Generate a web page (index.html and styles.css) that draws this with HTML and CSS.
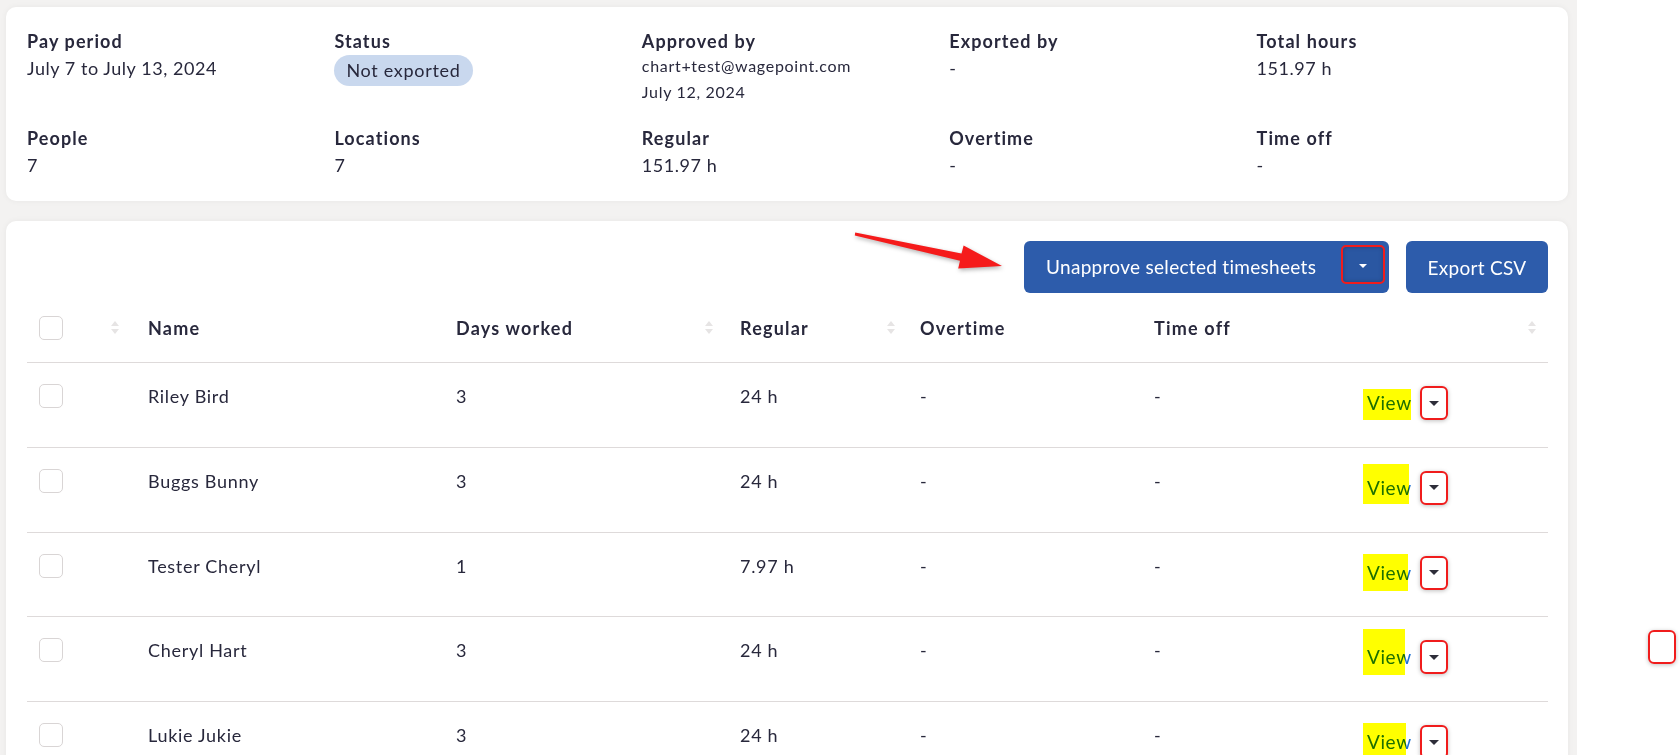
FILE: index.html
```html
<!DOCTYPE html>
<html lang="en">
<head>
<meta charset="UTF-8">
<meta name="viewport" content="width=device-width, initial-scale=1.0">
<title>Timesheets - Pay period</title>
<link rel="stylesheet" href="styles.css">
</head>
<body>
<div class="page">

  <section class="card summary">
    <div class="stat">
      <div class="stat-label">Pay period</div>
      <div class="stat-value">July 7 to July 13, 2024</div>
    </div>
    <div class="stat">
      <div class="stat-label">Status</div>
      <span class="pill">Not exported</span>
    </div>
    <div class="stat">
      <div class="stat-label">Approved by</div>
      <div class="stat-small">chart+test@wagepoint.com</div>
      <div class="stat-small">July 12, 2024</div>
    </div>
    <div class="stat">
      <div class="stat-label">Exported by</div>
      <div class="stat-value">-</div>
    </div>
    <div class="stat">
      <div class="stat-label">Total hours</div>
      <div class="stat-value">151.97 h</div>
    </div>
    <div class="stat">
      <div class="stat-label">People</div>
      <div class="stat-value">7</div>
    </div>
    <div class="stat">
      <div class="stat-label">Locations</div>
      <div class="stat-value">7</div>
    </div>
    <div class="stat">
      <div class="stat-label">Regular</div>
      <div class="stat-value">151.97 h</div>
    </div>
    <div class="stat">
      <div class="stat-label">Overtime</div>
      <div class="stat-value">-</div>
    </div>
    <div class="stat">
      <div class="stat-label">Time off</div>
      <div class="stat-value">-</div>
    </div>
  </section>

  <section class="card sheets">
    <div class="toolbar">
      <button class="btn btn-split">
        <span class="btn-text">Unapprove selected timesheets</span>
        <span class="btn-caret"><span class="tri tri-white"></span></span>
      </button>
      <button class="btn btn-export">Export CSV</button>
    </div>

    <div class="table">
      <div class="row head">
        <div class="cell cell-check"><span class="checkbox"></span><span class="sort sort-name"></span></div>
        <div class="cell">Name</div>
        <div class="cell">Days worked<span class="sort sort-days"></span></div>
        <div class="cell">Regular<span class="sort sort-reg"></span></div>
        <div class="cell">Overtime</div>
        <div class="cell">Time off</div>
        <div class="cell"><span class="sort sort-end"></span></div>
      </div>

      <div class="row">
        <div class="cell cell-check"><span class="checkbox"></span></div>
        <div class="cell">Riley Bird</div>
        <div class="cell">3</div>
        <div class="cell">24 h</div>
        <div class="cell">-</div>
        <div class="cell">-</div>
        <div class="cell cell-action"><a class="view">View<span class="mark"></span></a><span class="caret-box"><span class="tri"></span></span></div>
      </div>
      <div class="row">
        <div class="cell cell-check"><span class="checkbox"></span></div>
        <div class="cell">Buggs Bunny</div>
        <div class="cell">3</div>
        <div class="cell">24 h</div>
        <div class="cell">-</div>
        <div class="cell">-</div>
        <div class="cell cell-action"><a class="view">View<span class="mark"></span></a><span class="caret-box"><span class="tri"></span></span></div>
      </div>
      <div class="row">
        <div class="cell cell-check"><span class="checkbox"></span></div>
        <div class="cell">Tester Cheryl</div>
        <div class="cell">1</div>
        <div class="cell">7.97 h</div>
        <div class="cell">-</div>
        <div class="cell">-</div>
        <div class="cell cell-action"><a class="view">View<span class="mark"></span></a><span class="caret-box"><span class="tri"></span></span></div>
      </div>
      <div class="row">
        <div class="cell cell-check"><span class="checkbox"></span></div>
        <div class="cell">Cheryl Hart</div>
        <div class="cell">3</div>
        <div class="cell">24 h</div>
        <div class="cell">-</div>
        <div class="cell">-</div>
        <div class="cell cell-action"><a class="view">View<span class="mark"></span></a><span class="caret-box"><span class="tri"></span></span></div>
      </div>
      <div class="row">
        <div class="cell cell-check"><span class="checkbox"></span></div>
        <div class="cell">Lukie Jukie</div>
        <div class="cell">3</div>
        <div class="cell">24 h</div>
        <div class="cell">-</div>
        <div class="cell">-</div>
        <div class="cell cell-action"><a class="view">View<span class="mark"></span></a><span class="caret-box"><span class="tri"></span></span></div>
      </div>
    </div>
  </section>

  <!-- annotation arrow pointing at the bulk action button -->
  <svg class="arrow" width="180" height="60" viewBox="0 0 180 60">
    <polygon points="15.2,12.6 121.5,33.4 123.6,25.6 162,46 118.2,48.6 120,40.8 14.8,15.4" fill="#f51b1b"/>
  </svg>
</div>

<span class="stray-box"></span>
</body>
</html>
```

FILE: styles.css
```css
body {
  margin: 0;
  font-family: Lato, "Liberation Sans", sans-serif;
  color: #28283c;
  background-color: #fff;
}

.page {
  position: relative;
  width: 1577px;
  height: 755px;
  box-sizing: border-box;
  padding: 7px 9px 0 6px;
  background-color: #f3f2f1;
  overflow: hidden;
}

.card {
  background-color: #fff;
  border-radius: 10px;
  box-shadow: 0 0 6px rgba(0, 0, 0, 0.05);
}

/* summary card */
.summary {
  display: grid;
  grid-template-columns: repeat(5, 1fr);
  row-gap: 22px;
  padding: 22px 4px 20px 21px;
}

.stat-label {
  font-size: 18px;
  font-weight: 700;
  line-height: 24px;
  letter-spacing: 1.1px;
}

.stat-value {
  font-size: 18px;
  line-height: 31px;
  letter-spacing: 0.55px;
}

.stat-small {
  font-size: 16px;
  line-height: 25.5px;
  letter-spacing: 0.7px;
}

.pill {
  display: inline-block;
  margin-top: 2px;
  height: 31px;
  line-height: 31px;
  padding: 0 12px;
  border-radius: 16px;
  background-color: #c9d8ee;
  font-size: 18px;
  letter-spacing: 0.7px;
}

/* timesheets card */
.sheets {
  margin-top: 20px;
  padding: 20px 20px 0 21px;
  height: 600px;
}

.toolbar {
  display: flex;
  justify-content: flex-end;
  gap: 17px;
}

.btn {
  height: 52px;
  border: none;
  border-radius: 6px;
  background-color: #2d5cab;
  color: #fff;
  font-family: Lato, "Liberation Sans", sans-serif;
  font-size: 19px;
  letter-spacing: 0.3px;
  cursor: pointer;
}

.btn-split {
  display: flex;
  align-items: flex-start;
  width: 365px;
  padding: 0 4px 0 22px;
}

.btn-text {
  line-height: 52px;
}

.btn-caret {
  display: flex;
  align-items: center;
  justify-content: center;
  margin-left: auto;
  margin-top: 4px;
  width: 44px;
  height: 39px;
  box-sizing: border-box;
  border: 2px solid #f01c1c;
  border-radius: 5px;
  background-color: #2a57a2;
  box-shadow: inset 0 0 4px rgba(0, 0, 0, 0.25);
}

.btn-export {
  width: 142px;
}

.tri {
  width: 0;
  height: 0;
  border-left: 5px solid transparent;
  border-right: 5px solid transparent;
  border-top: 5px solid #2e2e3a;
}

.tri-white {
  margin-top: 3px;
  border-top-color: #fff;
  border-left-width: 4px;
  border-right-width: 4px;
  border-top-width: 4px;
}

/* table */
.row {
  display: grid;
  grid-template-columns: 121px 308px 284px 180px 234px 213px 181px;
  height: 84.75px;
  box-sizing: border-box;
  border-bottom: 1px solid #dedada;
  font-size: 18px;
  letter-spacing: 0.7px;
}

.row.head {
  height: 70px;
  font-weight: 700;
  letter-spacing: 1.2px;
}

.cell {
  padding-top: 21px;
  line-height: 24px;
}

.head .cell {
  display: flex;
  align-items: center;
  padding-top: 0;
}

.cell-check {
  display: flex;
  padding-left: 12px;
}

.checkbox {
  display: block;
  width: 24px;
  height: 24px;
  box-sizing: border-box;
  border: 1px solid #d9d5d5;
  border-radius: 5px;
  background-color: #fff;
}

.sort {
  margin-left: auto;
  width: 8px;
  height: 13px;
  position: relative;
}

.sort::before,
.sort::after {
  content: "";
  position: absolute;
  left: 0;
  border-left: 4px solid transparent;
  border-right: 4px solid transparent;
}

.sort::before {
  top: 0;
  border-bottom: 5px solid #e6e4e4;
}

.sort::after {
  bottom: 0;
  border-top: 5px solid #e6e4e4;
}

.sort-name { margin-right: 29px; }
.sort-days { margin-right: 27px; }
.sort-reg { margin-right: 25px; }
.sort-end { margin-right: 12px; }

.cell-action {
  display: flex;
  align-items: center;
  gap: 8px;
  padding-top: 23px;
  height: 34px;
}

.view {
  position: relative;
  display: block;
  font-size: 19px;
  line-height: 34px;
  letter-spacing: 0.6px;
  color: #1d6fd1;
  cursor: pointer;
}

/* hand drawn highlighter marks */
.mark {
  position: absolute;
  left: -4px;
  background-color: #ffff00;
  mix-blend-mode: multiply;
}

.row:nth-child(2) .mark { top: 3px; width: 48px; height: 31px; }
.row:nth-child(3) .mark { top: -7px; width: 46px; height: 40px; }
.row:nth-child(4) .mark { top: -2px; width: 45px; height: 37px; }
.row:nth-child(5) .mark { top: -11px; width: 42px; height: 46px; }
.row:nth-child(6) .mark { top: -2px; width: 43px; height: 40px; }

.caret-box {
  display: flex;
  align-items: center;
  justify-content: center;
  width: 28px;
  height: 34px;
  box-sizing: border-box;
  border: 2px solid #f01c1c;
  border-radius: 6px;
  background-color: #fff;
  box-shadow: 0 1px 4px rgba(0, 0, 0, 0.25);
}

.arrow {
  position: absolute;
  left: 840px;
  top: 220px;
  filter: drop-shadow(1px 2px 2px rgba(0, 0, 0, 0.3));
}

.stray-box {
  position: absolute;
  left: 1648px;
  top: 630px;
  width: 28px;
  height: 34px;
  box-sizing: border-box;
  border: 2px solid #f01c1c;
  border-radius: 6px;
  box-shadow: 0 1px 4px rgba(0, 0, 0, 0.25);
}
```
